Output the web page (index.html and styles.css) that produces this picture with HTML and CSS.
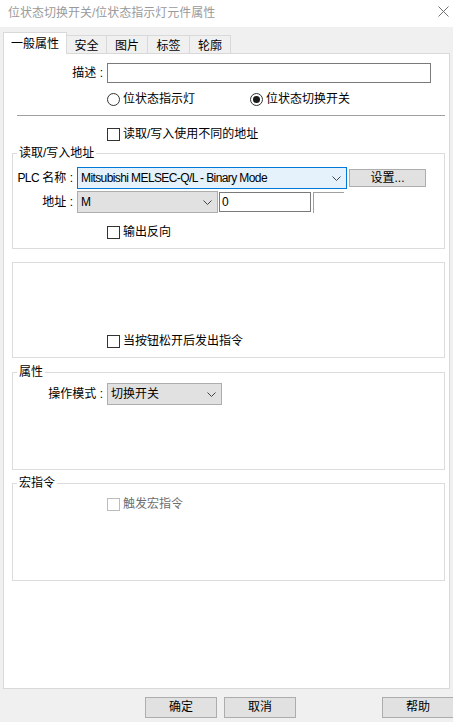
FILE: index.html
```html
<!DOCTYPE html>
<html lang="zh-CN">
<head>
<meta charset="utf-8">
<title>位状态切换开关/位状态指示灯元件属性</title>
<link rel="stylesheet" href="styles.css">
</head>
<body>
<div class="titlebar">
  <span class="title">位状态切换开关/位状态指示灯元件属性</span>
  <svg class="close" width="11" height="11" viewBox="0 0 11 11"><path d="M0.5 0.5L10.5 10.5M10.5 0.5L0.5 10.5" stroke="#707070" stroke-width="1" fill="none"/></svg>
</div>
<div class="tabs">
  <div class="tab active">一般属性</div>
  <div class="tab w41">安全</div>
  <div class="tab w42">图片</div>
  <div class="tab w43">标签</div>
  <div class="tab w42">轮廓</div>
</div>
<div class="panel">
  <div class="desc-row">
    <label class="lbl lbl-main">描述 :</label>
    <div class="textbox desc-input"></div>
  </div>
  <div class="radio-row">
    <span class="radio-item first"><span class="radio"></span><span class="opt-text">位状态指示灯</span></span>
    <span class="radio-item"><span class="radio checked"></span><span class="opt-text">位状态切换开关</span></span>
  </div>
  <div class="separator"></div>
  <div class="check-row main-check"><span class="checkbox"></span><span class="opt-text">读取/写入使用不同的地址</span></div>

  <fieldset class="group g1">
    <legend>读取/写入地址</legend>
    <div class="field-row plc-row">
      <span class="lbl lbl-g"><span class="latin">PLC</span> 名称 :</span>
      <div class="select focused plc-select"><span class="latin">Mitsubishi MELSEC-Q/L - Binary Mode</span><svg width="9" height="5" viewBox="0 0 9 5"><path d="M0.5 0.5L4.5 4.5L8.5 0.5" stroke="#444" fill="none"/></svg></div>
      <div class="btn set-btn">设置...</div>
    </div>
    <div class="field-row addr-row">
      <span class="lbl lbl-g">地址 :</span>
      <div class="select addr-select"><span class="latin">M</span><svg width="9" height="5" viewBox="0 0 9 5"><path d="M0.5 0.5L4.5 4.5L8.5 0.5" stroke="#444" fill="none"/></svg></div>
      <div class="textbox addr-input">0</div>
      <div class="partial-box"></div>
    </div>
    <div class="check-row g-check invert-row"><span class="checkbox"></span><span class="opt-text">输出反向</span></div>
  </fieldset>

  <div class="group g2">
    <div class="check-row g-check release-row"><span class="checkbox"></span><span class="opt-text">当按钮松开后发出指令</span></div>
  </div>

  <fieldset class="group g3">
    <legend>属性</legend>
    <div class="field-row mode-row">
      <span class="lbl lbl-mode">操作模式 :</span>
      <div class="select mode-select"><span>切换开关</span><svg width="9" height="5" viewBox="0 0 9 5"><path d="M0.5 0.5L4.5 4.5L8.5 0.5" stroke="#444" fill="none"/></svg></div>
    </div>
  </fieldset>

  <fieldset class="group g4">
    <legend>宏指令</legend>
    <div class="check-row g-check macro-row disabled"><span class="checkbox"></span><span class="opt-text">触发宏指令</span></div>
  </fieldset>
</div>
<div class="footer">
  <div class="btn foot-btn">确定</div>
  <div class="btn foot-btn cancel">取消</div>
  <div class="btn foot-btn help">帮助</div>
</div>
</body>
</html>
```
FILE: styles.css
```css
* { box-sizing: border-box; }
html, body { margin: 0; padding: 0; }
body {
  width: 453px;
  height: 722px;
  overflow: hidden;
  background: #f0f0f0;
  font: 12px/16px "Liberation Sans", "Noto Sans CJK SC", sans-serif;
  color: #000;
}
.latin { letter-spacing: -0.6px; }
.titlebar {
  height: 27px;
  background: #fff;
  display: flex;
  justify-content: space-between;
  align-items: flex-start;
  padding: 0 4px 0 8px;
}
.title { color: #9a9a9a; line-height: 16px; margin-top: 5px; }
.close { margin-top: 6px; }

.tabs {
  height: 27px;
  margin-bottom: -1px;
  padding-left: 3px;
  display: flex;
  align-items: flex-end;
  position: relative;
  z-index: 1;
}
.tab {
  height: 19px;
  border: 1px solid #d9d9d9;
  background: #f0f0f0;
  margin-left: -1px;
  text-align: center;
  padding-top: 2px;
  line-height: 16px;
}
.tab.active {
  width: 64px;
  height: 22px;
  margin-left: 0;
  background: #fff;
  border-bottom: none;
  padding-top: 3px;
}
.w41 { width: 41px; }
.w42 { width: 42px; }
.w43 { width: 43px; }

.panel {
  margin: 0 3px;
  width: 447px;
  height: 636px;
  background: #fff;
  border: 1px solid #d9d9d9;
}

.lbl { text-align: right; white-space: nowrap; flex: none; }
.lbl-main { width: 99px; margin-right: 4px; }
.lbl-g { width: 60px; margin-right: 4px; }
.lbl-mode { width: 90px; margin-right: 4px; }

.textbox {
  border: 1px solid #7a7a7a;
  background: #fff;
  height: 20px;
  line-height: 18px;
  padding-left: 2px;
}
.desc-row { display: flex; align-items: center; margin-top: 9px; }
.desc-input { width: 324px; }

.radio-row { display: flex; height: 16px; margin-top: 8px; padding-left: 103px; align-items: center; }
.radio-item { display: flex; align-items: center; }
.radio-item.first { width: 143px; }
.radio {
  width: 13px; height: 13px; border-radius: 50%;
  border: 1px solid #333; background: #fff;
  display: flex; align-items: center; justify-content: center;
}
.radio.checked::after {
  content: ""; width: 7px; height: 7px; border-radius: 50%; background: #1a1a1a;
}
.opt-text { margin-left: 3px; }

.separator { height: 1px; background: #a0a0a0; margin: 8px 0 0 13px; width: 428px; }

.check-row { display: flex; align-items: center; height: 16px; }
.checkbox { width: 13px; height: 13px; border: 1px solid #333; background: #fff; }
.main-check { margin-top: 10px; padding-left: 103px; }
.g-check { padding-left: 94px; }
.disabled .checkbox { border-color: #bcbcbc; }
.disabled .opt-text { color: #6d6d6d; }

.group {
  margin: 0 0 0 8px;
  width: 433px;
  border: 1px solid #dcdcdc;
  padding: 0;
  min-width: 0;
}
.group legend {
  margin-left: 4px;
  padding: 0 2px;
  line-height: 14px;
}
.g1 { margin-top: 4px; padding-bottom: 8px; }
.field-row { display: flex; align-items: center; }
.plc-row { margin-top: 7px; }
.addr-row { margin-top: 2px; }
.select {
  height: 22px;
  border: 1px solid #adadad;
  background: #e1e1e1;
  display: flex;
  align-items: center;
  justify-content: space-between;
  padding: 0 5px 0 3px;
  flex: none;
}
.select svg { flex: none; }
.select.focused { border-color: #0078d7; background: #e5f1fb; }
.plc-select { width: 270px; }
.addr-select { width: 141px; }
.addr-input { width: 92px; margin-left: 1px; }
.partial-box {
  width: 31px; height: 21px; margin-left: 2px;
  border-top: 1px solid #a0a0a0; border-left: 1px solid #a0a0a0;
}
.btn {
  border: 1px solid #adadad;
  background: #e1e1e1;
  text-align: center;
  flex: none;
}
.set-btn { width: 77px; height: 18px; line-height: 16px; margin-left: 2px; }
.invert-row { margin-top: 11px; }

.g2 { margin-top: 13px; padding: 70px 0 8px; }

.g3 { margin-top: 7px; padding-bottom: 64px; }
.mode-row { margin-top: 4px; }
.mode-select { width: 115px; }

.g4 { margin-top: 6px; padding-bottom: 68px; }
.macro-row { margin-top: 6px; }

.footer { display: flex; margin-top: 8px; padding-left: 145px; }
.foot-btn { width: 72px; height: 21px; line-height: 19px; }
.cancel { margin-left: 7px; }
.help { margin-left: 86px; }
```
